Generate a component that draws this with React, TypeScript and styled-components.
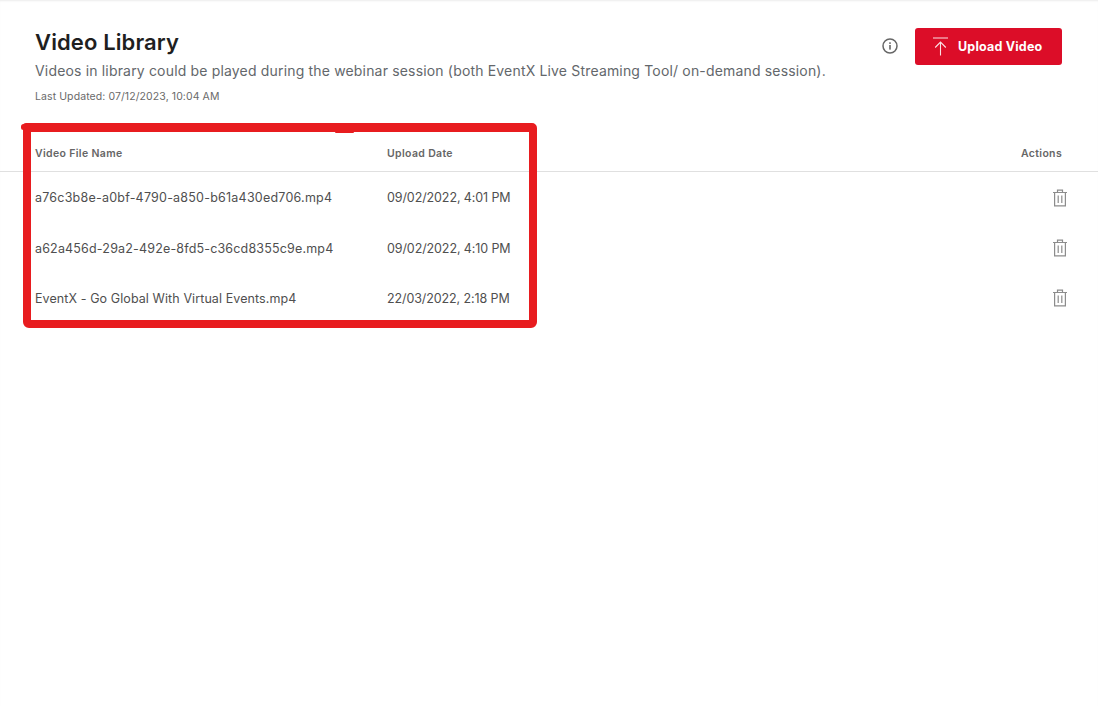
import React from "react";
import styled, { createGlobalStyle } from "styled-components";

const Global = createGlobalStyle`
  html, body { margin: 0; padding: 0; background: #fff; }
  body { font-family: "Inter", "Liberation Sans", sans-serif; }
`;

const Page = styled.div`
  position: relative;
  width: 1098px;
  height: 706px;
  overflow: hidden;
  background: #fff;
  box-shadow: inset 0 2px 2px -1px #ececec;
`;

const Header = styled.header`
  display: flex;
  justify-content: space-between;
  align-items: flex-start;
  padding: 28px 36px 0 35px;
  height: 134px;
  box-sizing: border-box;
`;

const TitleBlock = styled.div`
  display: flex;
  flex-direction: column;
`;

const Title = styled.h1`
  margin: 0;
  font-family: "Inter", sans-serif;
  font-size: 22px;
  line-height: 28px;
  font-weight: 600;
  color: #1f1f1f;
  letter-spacing: 0.12px;
`;

const Subtitle = styled.p`
  margin: 5px 0 0;
  font-family: "Inter", sans-serif;
  font-size: 14px;
  line-height: 20px;
  font-weight: 400;
  color: #63676b;
  letter-spacing: 0.17px;
`;

const Updated = styled.p`
  margin: 9px 0 0;
  font-family: "Inter", sans-serif;
  font-size: 10.5px;
  line-height: 14px;
  color: #6a6a6a;
  letter-spacing: 0.09px;
`;

const Controls = styled.div`
  display: flex;
  align-items: center;
  gap: 17px;
`;

const InfoIcon = styled.svg`
  width: 16px;
  height: 16px;
  display: block;
  margin-bottom: 1px;
`;

const UploadButton = styled.button`
  display: flex;
  align-items: center;
  gap: 10px;
  width: 147px;
  height: 37px;
  padding: 0 0 0 18px;
  box-sizing: border-box;
  border: 0;
  border-radius: 3px;
  background: #dc0d28;
  color: #fff;
  font-family: "Inter", sans-serif;
  font-size: 12.5px;
  font-weight: 700;
  letter-spacing: 0.2px;
`;

const UploadIcon = styled.svg`
  width: 15px;
  height: 19px;
  display: block;
  opacity: 0.88;
  margin-top: -1px;
`;

const Row = styled.div<{ $height: number; $head?: boolean }>`
  display: grid;
  grid-template-columns: 352px 1fr 60px;
  align-items: center;
  padding: 0 30px 0 35px;
  height: ${(p) => p.$height}px;
  box-sizing: border-box;
  ${(p) => p.$head && "border-bottom: 1px solid #e0e0e0; padding-top: 1px;"}
`;

const HeadCell = styled.div<{ $right?: boolean }>`
  font-family: "Inter", sans-serif;
  font-size: 10.5px;
  font-weight: 600;
  color: #666;
  letter-spacing: 0.34px;
  ${(p) => p.$right && "text-align: right; padding-right: 6px;"}
`;

const Cell = styled.div<{ $tracking: number }>`
  font-family: "Inter", sans-serif;
  font-size: 12.5px;
  color: #4f4f4f;
  letter-spacing: ${(p) => p.$tracking}px;
`;

const IconCell = styled.div`
  display: flex;
  justify-content: flex-end;
`;

const TrashIcon = styled.svg`
  width: 16px;
  height: 18px;
  display: block;
`;

const Annotation = styled.div`
  position: absolute;
  left: 23px;
  top: 123px;
  width: 514px;
  height: 205px;
  box-sizing: border-box;
  border: 8px solid #e81c1f;
  border-top-width: 9px;
  border-radius: 3px 5px 6px 6px;
  pointer-events: none;
`;

const Tick = styled.div`
  position: absolute;
  left: 335px;
  top: 123px;
  width: 19px;
  height: 9.5px;
  background: #e81c1f;
  border-radius: 1px;
`;

const CornerBlob = styled.div`
  position: absolute;
  left: 21px;
  top: 124px;
  width: 5px;
  height: 6px;
  background: #e81c1f;
  border-radius: 3px;
`;

const rows: [string, number, string, number][] = [
  ["a76c3b8e-a0bf-4790-a850-b61a430ed706.mp4", 0.22, "09/02/2022, 4:01 PM", 51],
  ["a62a456d-29a2-492e-8fd5-c36cd8355c9e.mp4", 0.17, "09/02/2022, 4:10 PM", 50],
  ["EventX - Go Global With Virtual Events.mp4", 0.09, "22/03/2022, 2:18 PM", 50],
];

export default function App() {
  return (
    <Page>
      <Global />
      <Header>
        <TitleBlock>
          <Title>Video Library</Title>
          <Subtitle>
            Videos in library could be played during the webinar session (both EventX Live Streaming Tool/ on-demand session).
          </Subtitle>
          <Updated>Last Updated: 07/12/2023, 10:04 AM</Updated>
        </TitleBlock>
        <Controls>
          <InfoIcon viewBox="0 0 16 16" fill="none">
            <circle cx="8" cy="8" r="7" stroke="#666" strokeWidth="1.5" />
            <rect x="7.2" y="7" width="1.6" height="4.6" fill="#666" />
            <rect x="7.2" y="4.3" width="1.6" height="1.6" fill="#666" />
          </InfoIcon>
          <UploadButton>
            <UploadIcon viewBox="0 0 15 19" fill="none" stroke="#fff" strokeWidth="1.1">
              <path d="M0 1h15M7.5 18.5V5M2.2 10.5 7.5 5l5.3 5.5" />
            </UploadIcon>
            Upload Video
          </UploadButton>
        </Controls>
      </Header>
      <Row $head $height={38}>
        <HeadCell>Video File Name</HeadCell>
        <HeadCell>Upload Date</HeadCell>
        <HeadCell $right>Actions</HeadCell>
      </Row>
      {rows.map(([name, tracking, date, height]) => (
        <Row key={name} $height={height}>
          <Cell $tracking={tracking}>{name}</Cell>
          <Cell $tracking={-0.1}>{date}</Cell>
          <IconCell>
            <TrashIcon viewBox="0 0 16 18" fill="none" stroke="#8c8c8c" strokeWidth="1.2">
              <path d="M1 3.5h14M5.5 3.2V1.2h5v2M2.6 3.5v13.3h10.8V3.5M6.2 6.5v7.5M9.8 6.5v7.5" />
            </TrashIcon>
          </IconCell>
        </Row>
      ))}
      <Annotation />
      <Tick />
      <CornerBlob />
    </Page>
  );
}
